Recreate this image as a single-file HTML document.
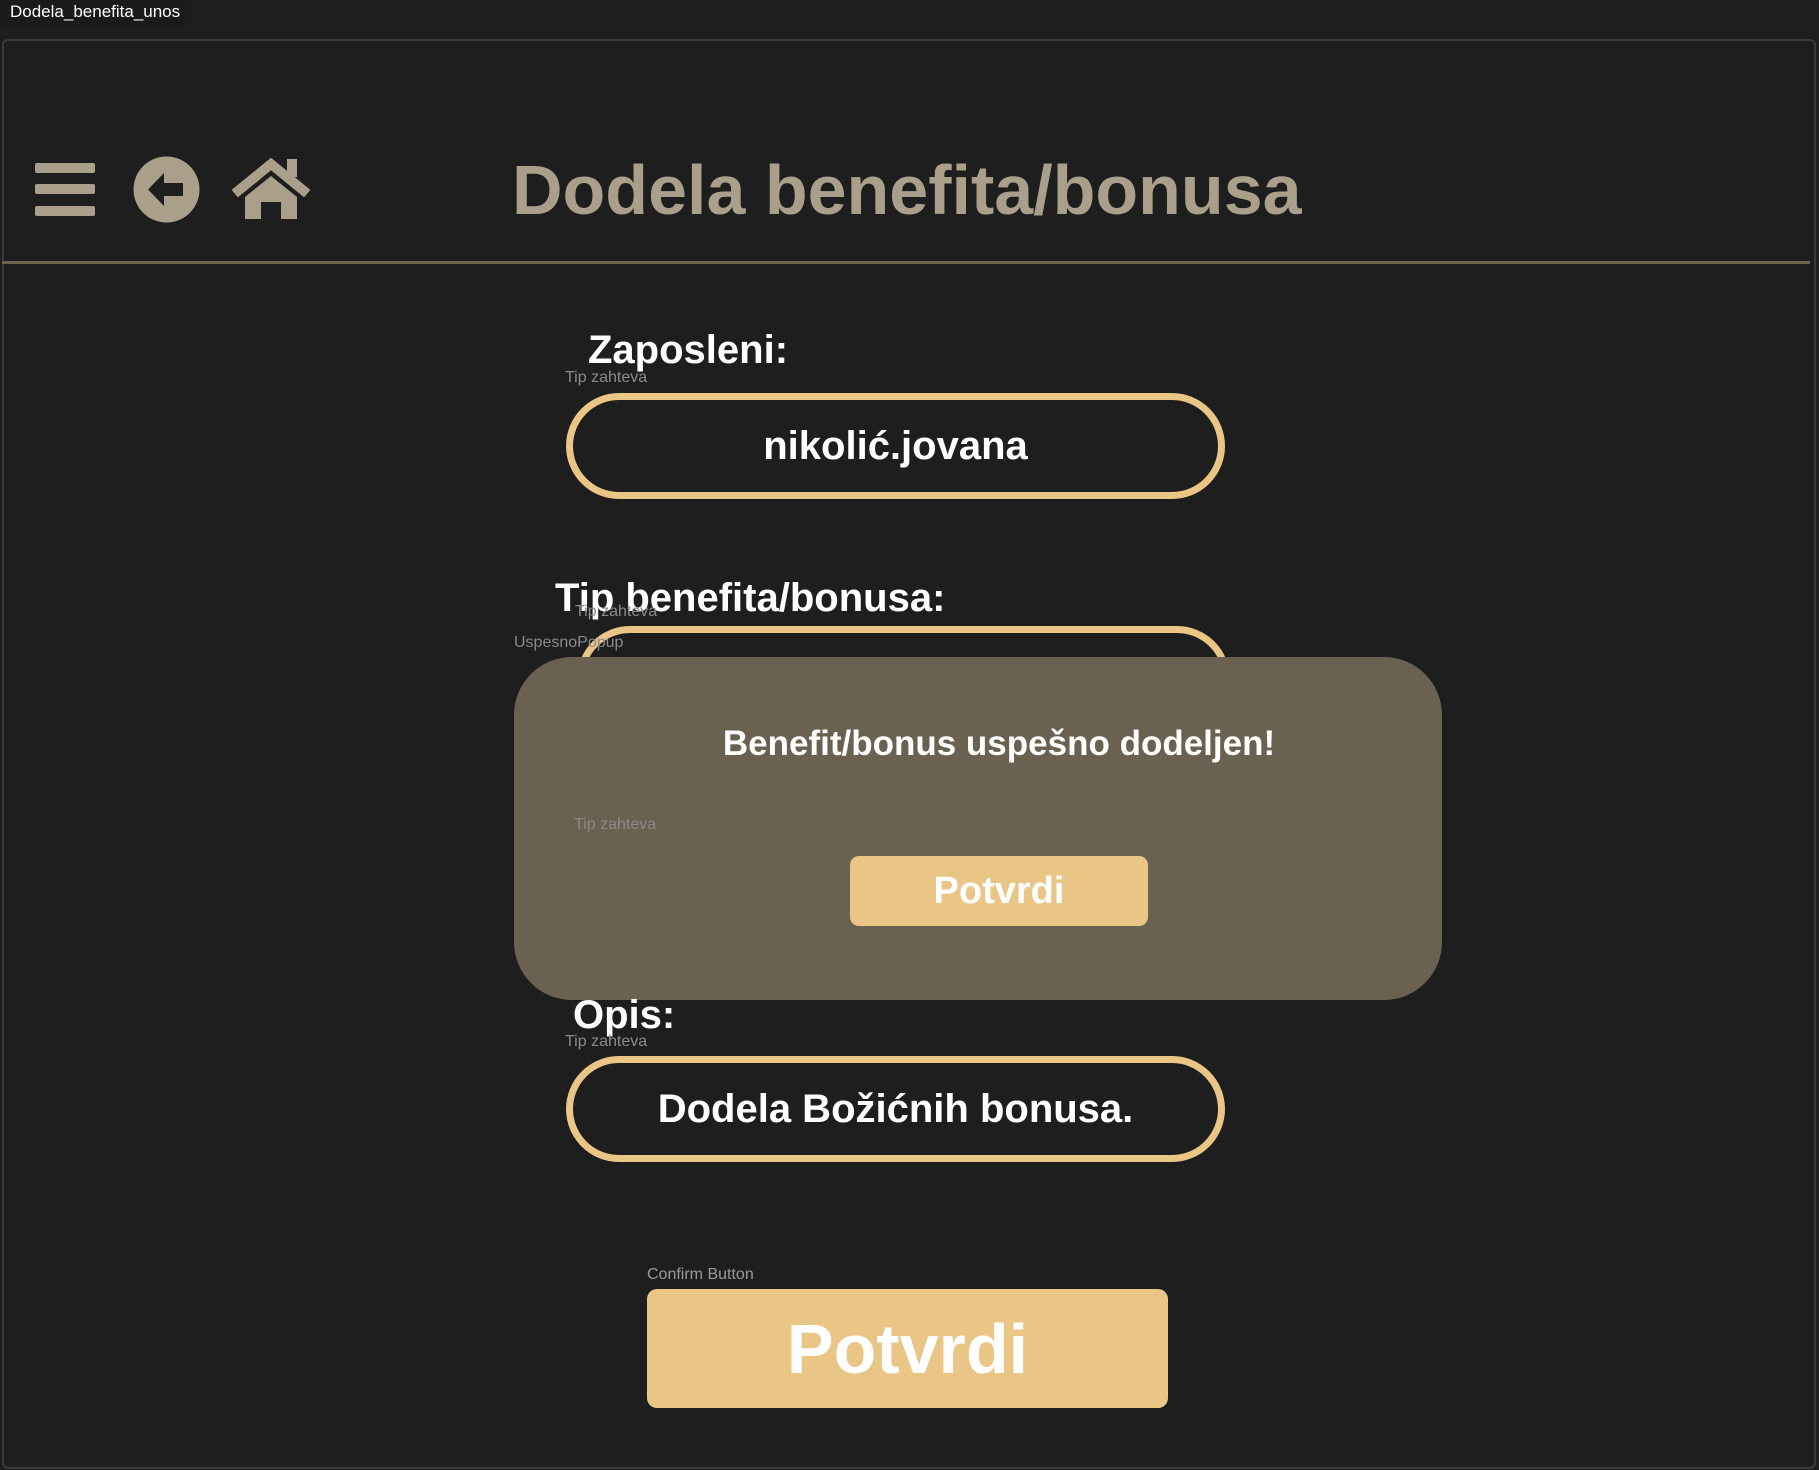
<!DOCTYPE html>
<html><head><meta charset="utf-8"><style>
*{margin:0;padding:0;box-sizing:border-box}
body{width:1819px;height:1470px;background:#1e1e1e;font-family:"Liberation Sans",sans-serif;position:relative;overflow:hidden;color:#fff}
.a{position:absolute;white-space:nowrap}
.sm{font-size:16px;color:#8a8a8a}
.lbl{font-size:40px;font-weight:bold;color:#fff}
.inp{position:absolute;border:7px solid #e9c586;border-radius:60px;display:flex;align-items:center;justify-content:center;font-size:40px;font-weight:bold;color:#fff}
</style></head><body>
<div class="a" style="left:0;top:0;width:185px;height:30px;background:#1a1a1a;border-radius:0 0 6px 0"></div>
<div class="a" style="left:10px;top:2px;font-size:17px;color:#fff">Dodela_benefita_unos</div>
<div class="a" style="left:2px;top:39px;width:1814px;height:1430px;border:2px solid #3a3a3a;border-radius:6px"></div>
<div class="a" style="left:2px;top:261px;width:1808px;height:3px;background:#6f6450"></div>
<div class="a" style="left:35px;top:163px;width:60px;height:10px;background:#aa9f8b;border-radius:2px"></div>
<div class="a" style="left:35px;top:184px;width:60px;height:10px;background:#aa9f8b;border-radius:2px"></div>
<div class="a" style="left:35px;top:206px;width:60px;height:10px;background:#aa9f8b;border-radius:2px"></div>
<svg class="a" style="left:133px;top:156px" width="67" height="67" viewBox="0 0 67 67"><circle cx="33.5" cy="33.5" r="33" fill="#aa9f8b"/><path d="M15 33.5 L31 17 V27 H50 V40 H31 V50 Z" fill="#1e1e1e"/></svg>
<svg class="a" style="left:232px;top:157px" width="80" height="63" viewBox="0 0 80 63"><path d="M39 2 L77 33 L72 39 L39 12 L6 39 L1 33 Z" fill="#aa9f8b" stroke="#aa9f8b" stroke-width="2" stroke-linejoin="round"/><rect x="55" y="2" width="10" height="18" fill="#aa9f8b"/><path d="M39 19 L65 40 V62 H49 V45 H29 V62 H13 V40 Z" fill="#aa9f8b"/></svg>
<div class="a" style="left:512px;top:150px;font-size:70px;font-weight:bold;color:#aa9f8b">Dodela benefita/bonusa</div>

<div class="a lbl" style="left:588px;top:328px">Zaposleni:</div>
<div class="a sm" style="left:565px;top:369px">Tip zahteva</div>
<div class="inp" style="left:566px;top:393px;width:659px;height:106px">nikolić.jovana</div>

<div class="a lbl" style="left:555px;top:576px">Tip benefita/bonusa:</div>
<div class="a sm" style="left:575px;top:603px">Tip zahteva</div>
<div class="inp" style="left:577px;top:626px;width:653px;height:106px"></div>
<div class="a sm" style="left:514px;top:634px">UspesnoPopup</div>

<div class="a" style="left:514px;top:657px;width:928px;height:343px;background:#6b6150;border-radius:58px"></div>
<div class="a" style="left:514px;top:724px;width:970px;text-align:center;font-size:35px;font-weight:bold">Benefit/bonus uspešno dodeljen!</div>
<div class="a sm" style="left:574px;top:816px">Tip zahteva</div>
<div class="a" style="left:850px;top:856px;width:298px;height:70px;background:#e9c586;border-radius:9px;font-size:38px;font-weight:bold;display:flex;align-items:center;justify-content:center">Potvrdi</div>

<div class="a lbl" style="left:573px;top:993px">Opis:</div>
<div class="a sm" style="left:565px;top:1033px">Tip zahteva</div>
<div class="inp" style="left:566px;top:1056px;width:659px;height:106px">Dodela Božićnih bonusa.</div>

<div class="a sm" style="left:647px;top:1266px;color:#9a9a9a">Confirm Button</div>
<div class="a" style="left:647px;top:1289px;width:521px;height:119px;background:#e9c586;border-radius:10px;font-size:70px;font-weight:bold;display:flex;align-items:center;justify-content:center">Potvrdi</div>
</body></html>
